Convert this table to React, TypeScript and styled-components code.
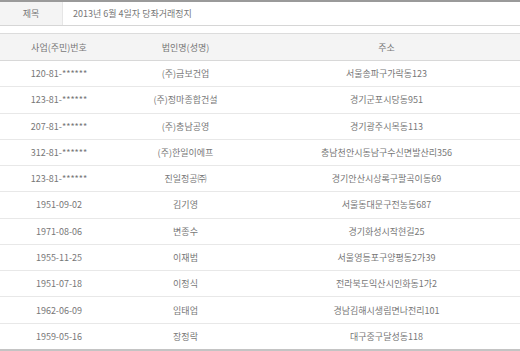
import React from 'react';
import styled, { createGlobalStyle } from 'styled-components';

const GlobalStyle = createGlobalStyle`
  html, body {
    margin: 0;
    padding: 0;
    background: #fff;
  }
  body {
    font-family: "Noto Sans CJK KR", "Noto Sans", sans-serif;
    font-size: 9px;
    color: #777;
  }
`;

const Page = styled.div`
  width: 520px;
  height: 351px;
  overflow: hidden;
  background: #fff;
`;

const TitleBar = styled.div`
  display: flex;
  height: 23px;
  border-top: 2px solid #9a9a9a;
  border-bottom: 1px solid #d6d6d6;
`;

const TitleLabel = styled.div`
  width: 62px;
  display: flex;
  align-items: center;
  justify-content: center;
  background: #f4f4f4;
  border-right: 1px solid #e6e6e6;
`;

const TitleValue = styled.div`
  flex: 1;
  display: flex;
  align-items: center;
  padding-left: 10px;
`;

const Table = styled.div`
  margin-top: 7px;
  border-bottom: 2px solid #c4c4c4;
`;

const Row = styled.div<{ $head?: boolean }>`
  display: grid;
  grid-template-columns: 118px 135px 1fr;
  height: ${p => (p.$head ? '26px' : '25.27px')};
  border-bottom: 1px solid ${p => (p.$head ? '#d8d8d8' : '#e8e8e8')};
  border-top: ${p => (p.$head ? '1px solid #dcdcdc' : 'none')};
  background: ${p => (p.$head ? '#f4f4f4' : '#fff')};

  &:last-child {
    border-bottom: none;
  }
`;

const Cell = styled.div<{ $head?: boolean }>`
  display: flex;
  align-items: center;
  justify-content: center;
  white-space: nowrap;
  letter-spacing: 0;
  & + & {
    border-left: ${p => (p.$head ? '1px solid #e0e0e0' : 'none')};
  }
`;

const rows = [
  ['120-81-******', '(주)금보건업', '서울송파구가락동123'],
  ['123-81-******', '(주)정마종합건설', '경기군포시당동951'],
  ['207-81-******', '(주)충남공영', '경기광주시목동113'],
  ['312-81-******', '(주)한일이에프', '충남천안시동남구수신면발산리356'],
  ['123-81-******', '진일정공㈜', '경기안산시상록구팔곡이동69'],
  ['1951-09-02', '김기영', '서울동대문구전농동687'],
  ['1971-08-06', '변종수', '경기화성시작현길25'],
  ['1955-11-25', '이재범', '서울영등포구양평동2가39'],
  ['1951-07-18', '이정식', '전라북도익산시인화동1가2'],
  ['1962-06-09', '임태업', '경남김해시생림면나전리101'],
  ['1959-05-16', '장정락', '대구중구달성동118'],
];

const App = () => {
  return (
    <Page>
      <GlobalStyle />
      <TitleBar>
        <TitleLabel>제목</TitleLabel>
        <TitleValue>2013년 6월 4일자 당좌거래정지</TitleValue>
      </TitleBar>
      <Table>
        <Row $head>
          <Cell $head>사업(주민)번호</Cell>
          <Cell $head>법인명(성명)</Cell>
          <Cell $head>주소</Cell>
        </Row>
        {rows.map((r, i) => (
          <Row key={i}>
            <Cell>{r[0]}</Cell>
            <Cell>{r[1]}</Cell>
            <Cell>{r[2]}</Cell>
          </Row>
        ))}
      </Table>
    </Page>
  );
};

export default App;
